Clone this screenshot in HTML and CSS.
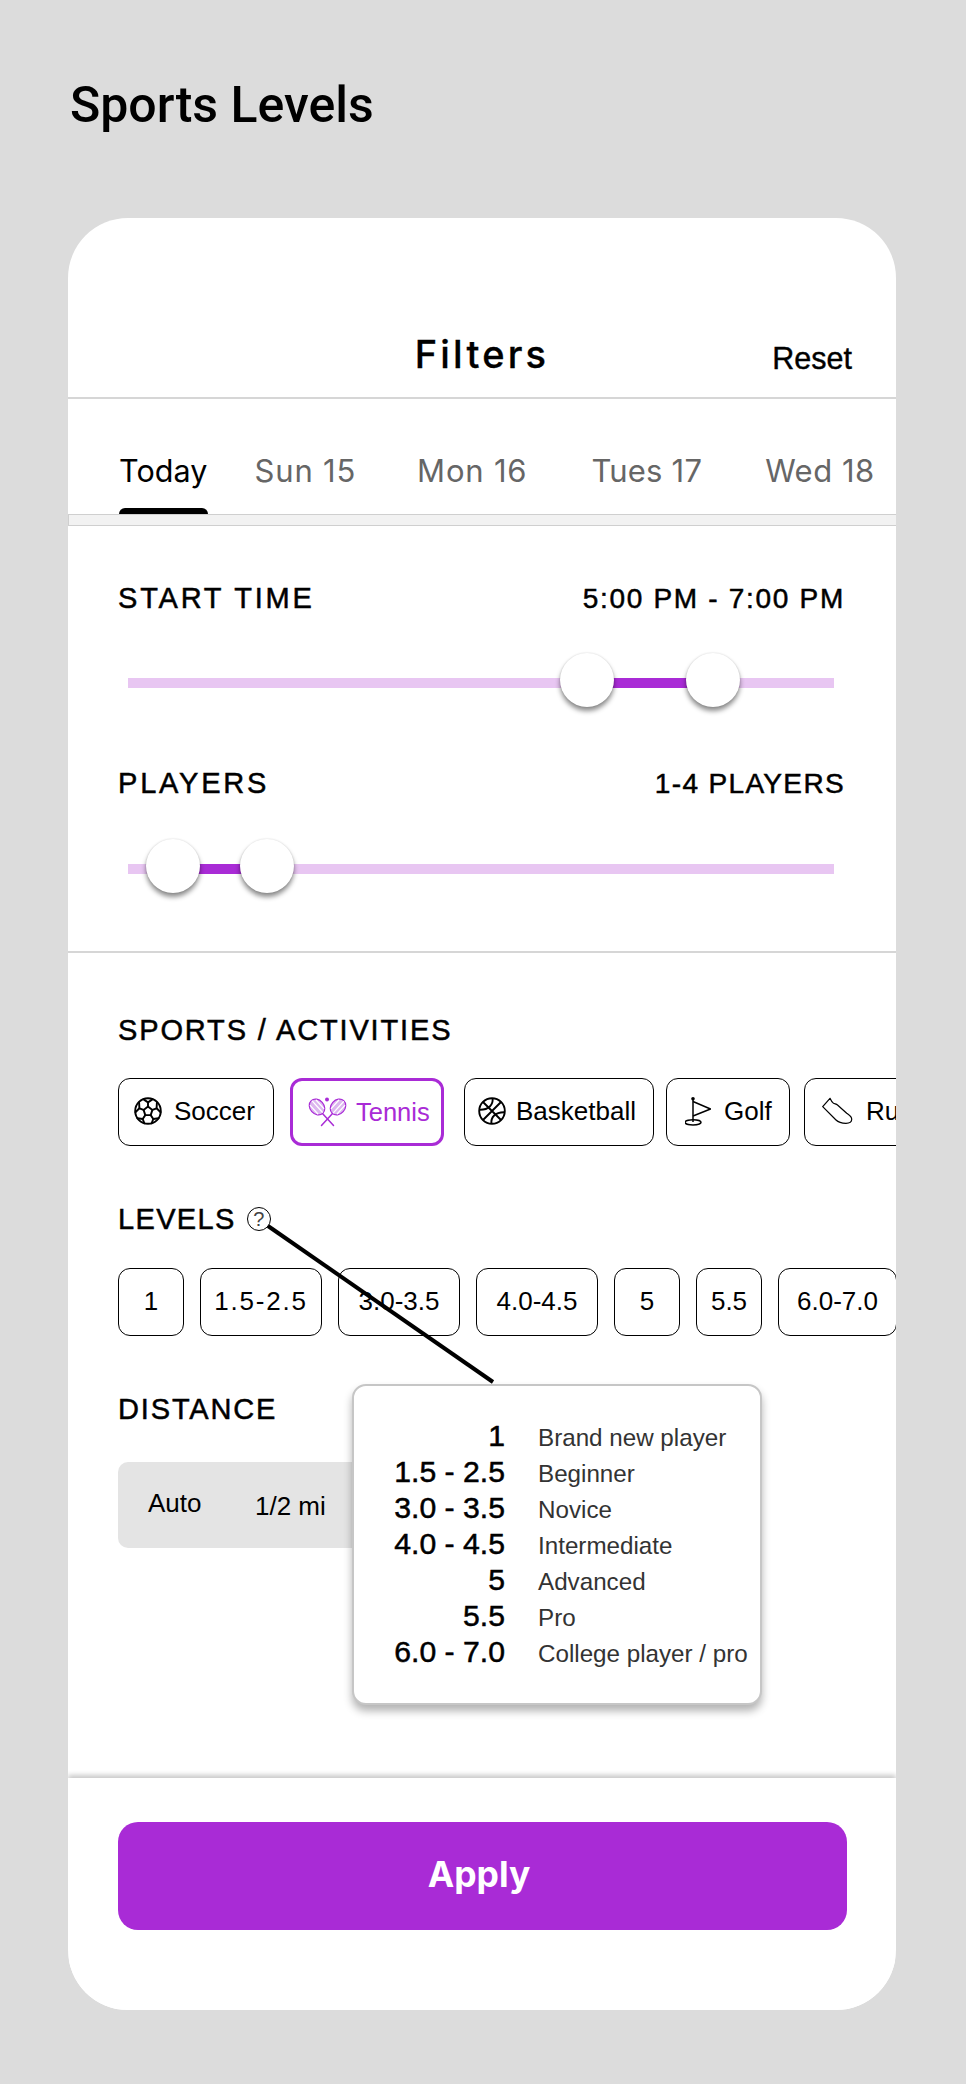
FILE: index.html
```html
<!DOCTYPE html>
<html lang="en">
<head>
<meta charset="utf-8">
<title>Sports Levels</title>
<link rel="stylesheet" href="styles.css">
</head>
<body>
<h1 class="page-title">Sports Levels</h1>
<div class="card">
  <header class="header">
    <span></span>
    <h2 class="header-title">Filters</h2>
    <button class="reset">Reset</button>
  </header>
  <nav class="tabs">
    <span class="tab tab-active">Today</span>
    <span class="tab tab-sun">Sun 15</span>
    <span class="tab">Mon 16</span>
    <span class="tab tab-tues">Tues 17</span>
    <span class="tab tab-wed">Wed 18</span>
  </nav>
  <div class="strip"></div>

  <section class="ranges">
    <div class="label-row">
      <span class="label label-wide">START TIME</span>
      <span class="value">5:00 PM - 7:00 PM</span>
    </div>
    <div class="track">
      <div class="fill" style="left:65%;width:17.9%"></div>
      <div class="thumb" style="left:65%"></div>
      <div class="thumb" style="left:82.9%"></div>
    </div>
    <div class="label-row label-row-second">
      <span class="label label-wide">PLAYERS</span>
      <span class="value value-players">1-4 PLAYERS</span>
    </div>
    <div class="track track-second">
      <div class="fill" style="left:6.4%;width:13.3%"></div>
      <div class="thumb" style="left:6.4%"></div>
      <div class="thumb" style="left:19.7%"></div>
    </div>
  </section>

  <section class="options">
    <div class="label label-block">SPORTS / ACTIVITIES</div>
    <div class="chips">
      <div class="chip chip-soccer">
        <svg class="icon" width="28" height="28" viewBox="0 0 28 28" fill="none" stroke="#000" stroke-width="1.9" stroke-linejoin="round" stroke-linecap="round">
          <circle cx="14" cy="14" r="12.8"/>
          <path d="M14 9.6 18.4 12.9 16.7 18.1H11.3L9.6 12.9Z"/>
          <path d="M14 9.6V5.4M18.4 12.9 22.6 11.3M16.7 18.1 19.3 22M11.3 18.1 8.7 22M9.6 12.9 5.4 11.3"/>
          <path d="M9.6 2.4 14 5.4 18.4 2.4M22.6 11.3 22.9 5.6M22.6 11.3 26.6 15.2M19.3 22 24.6 21.2M19.3 22 17.6 26.3M8.7 22 10.4 26.3M8.7 22 3.4 21.2M5.4 11.3 1.4 15.2M5.4 11.3 5.1 5.6"/>
        </svg>
        <span>Soccer</span>
      </div>
      <div class="chip chip-tennis">
        <svg class="icon" width="39" height="30" viewBox="0 0 39 30" fill="none" stroke="#a92bd6" stroke-linecap="round">
          <g transform="rotate(-42 9 10)">
            <ellipse cx="9" cy="10" rx="7" ry="8.6" fill="#dcb6ef" stroke-width="1.2"/>
            <path d="M5 4.5V15.5M9.5 2.5V17.5M13 4.5V15.5" stroke="#fff" stroke-width="1.3"/>
          </g>
          <g transform="rotate(42 30 10)">
            <ellipse cx="30" cy="10" rx="7" ry="8.6" fill="#dcb6ef" stroke-width="1.2"/>
            <path d="M26 4.5V15.5M30.5 2.5V17.5M34 4.5V15.5" stroke="#fff" stroke-width="1.3"/>
          </g>
          <path d="M14.5 16.5 25.5 28.5M24.5 16.5 13.5 28.5" stroke-width="1.5"/>
          <circle cx="19" cy="2.4" r="2" fill="#a92bd6" stroke="none"/>
        </svg>
        <span>Tennis</span>
      </div>
      <div class="chip chip-basketball">
        <svg class="icon" width="28" height="28" viewBox="0 0 28 28" fill="none" stroke="#000" stroke-width="1.9">
          <circle cx="14" cy="14" r="12.8"/>
          <path d="M5 5 23 23M23 5 5 23"/>
          <path d="M14.6 1.4C15.2 7.6 11 13 1.6 12.8"/>
          <path d="M13.4 26.6C12.8 20.4 17 15 26.4 15.2"/>
        </svg>
        <span>Basketball</span>
      </div>
      <div class="chip chip-golf">
        <svg class="icon" width="26" height="30" viewBox="0 0 26 30" fill="none" stroke="#000" stroke-width="1.5" stroke-linejoin="round">
          <circle cx="8" cy="2.8" r="1.8" fill="#000" stroke="none"/>
          <path d="M8 3V26"/>
          <path d="M8 5.5 25.5 13 8 20"/>
          <ellipse cx="8" cy="26.3" rx="8" ry="2.6"/>
        </svg>
        <span>Golf</span>
      </div>
      <div class="chip chip-run">
        <svg class="icon" width="31" height="28" viewBox="0 0 31 28" fill="none" stroke="#000" stroke-width="1.2" stroke-linejoin="round">
          <path d="M.7 9.7 8 1.3C9 3.5 10 5.5 11.5 6.3 13 7 14.5 7 15.5 8L24.7 16.3C27 18 30 19.5 29.7 22.5 29.5 25.5 27 26.3 24 26.3 20 26.3 16.5 25.5 14 23Z"/>
        </svg>
        <span>Running</span>
      </div>
    </div>

    <div class="label-levels">
      <span class="label label-tight">LEVELS</span>
      <span class="help">?</span>
    </div>
    <div class="levels">
      <div class="chip level level-single">1</div>
      <div class="chip level level-spaced">1.5-2.5</div>
      <div class="chip level">3.0-3.5</div>
      <div class="chip level">4.0-4.5</div>
      <div class="chip level level-single">5</div>
      <div class="chip level level-single">5.5</div>
      <div class="chip level level-last">6.0-7.0</div>
    </div>

    <div class="label label-block label-distance">DISTANCE</div>
    <div class="distance">
      <span class="distance-auto">Auto</span>
      <span class="distance-half">1/2 mi</span>
    </div>
  </section>

  <footer class="footer">
    <button class="apply">Apply</button>
  </footer>

  <svg class="connector" width="240" height="170" viewBox="0 0 240 170">
    <path d="M4 4 L229 160" stroke="#000" stroke-width="4" fill="none"/>
  </svg>

  <div class="popup">
    <span class="lvl">1</span><span class="desc">Brand new player</span>
    <span class="lvl">1.5 - 2.5</span><span class="desc">Beginner</span>
    <span class="lvl">3.0 - 3.5</span><span class="desc">Novice</span>
    <span class="lvl">4.0 - 4.5</span><span class="desc">Intermediate</span>
    <span class="lvl">5</span><span class="desc">Advanced</span>
    <span class="lvl">5.5</span><span class="desc">Pro</span>
    <span class="lvl">6.0 - 7.0</span><span class="desc">College player / pro</span>
  </div>
</div>
</body>
</html>
```
FILE: styles.css
```css
* { box-sizing: border-box; }
html, body { margin: 0; padding: 0; }
body {
  width: 966px;
  height: 2084px;
  background: #dcdcdc;
  font-family: "Liberation Sans", Arial, sans-serif;
  color: #000;
  overflow: hidden;
}
.page-title {
  margin: 0;
  padding: 73px 0 0 70px;
  height: 218px;
  font-family: Roboto, sans-serif;
  font-size: 50px;
  line-height: 64px;
  font-weight: 500;
}
.card {
  position: relative;
  width: 828px;
  height: 1792px;
  margin-left: 68px;
  background: #fff;
  border-radius: 60px;
  overflow: hidden;
  display: flex;
  flex-direction: column;
}
.header {
  display: grid;
  grid-template-columns: 1fr auto 1fr;
  align-items: baseline;
  padding: 112px 44px 19px 44px;
  border-bottom: 2px solid #d6d6d6;
}
.header-title {
  margin: 0;
  font-family: Inter, sans-serif;
  font-size: 38px;
  line-height: 48px;
  font-weight: 500;
  letter-spacing: 3.2px;
  -webkit-text-stroke: 0.3px #000;
}
.reset {
  justify-self: end;
  border: 0;
  background: none;
  padding: 0;
  font-family: "Liberation Sans", Arial, sans-serif;
  font-size: 30.5px;
  line-height: 36px;
  -webkit-text-stroke: 0.4px #000;
  color: #000;
  transform: translateY(1px);
}
.tabs {
  display: flex;
  gap: 64px;
  height: 115px;
  padding-left: 51px;
  white-space: nowrap;
}
.tab {
  position: relative;
  padding-top: 54px;
  font-family: Inter, sans-serif;
  font-size: 31px;
  line-height: 36px;
  letter-spacing: 0.8px;
  color: #666;
}
.tab-active {
  color: #000;
  font-size: 30.5px;
  letter-spacing: 0.1px;
  margin-right: -17px;
}
.tab-sun { margin-right: -3px; }
.tab-tues { letter-spacing: 0.2px; margin-right: -1px; }
.tab-wed { letter-spacing: 0.5px; }
.tab-active::after {
  content: "";
  position: absolute;
  left: 0;
  right: 0;
  bottom: 0;
  height: 6px;
  background: #000;
  border-radius: 6px 6px 0 0;
}
.strip {
  height: 12px;
  background: #f2f2f2;
  border: 1px solid #cfcfcf;
  border-right: 0;
  flex: none;
}
.ranges {
  height: 427px;
  flex: none;
  padding: 56px 62px 0 50px;
  border-bottom: 2px solid #d6d6d6;
}
.label-row {
  display: flex;
  justify-content: space-between;
  align-items: baseline;
  margin-right: -11px;
}
.label-row-second { margin-top: 79px; }
.label {
  font-size: 29px;
  line-height: 32px;
  letter-spacing: 1.85px;
  -webkit-text-stroke: 0.5px #000;
}
.label-wide { letter-spacing: 2.8px; }
.label-tight { letter-spacing: 1.35px; }
.value {
  font-size: 28px;
  line-height: 32px;
  letter-spacing: 1.7px;
  -webkit-text-stroke: 0.5px #000;
}
.value-players { letter-spacing: 1.35px; }
.track {
  position: relative;
  height: 10px;
  margin: 63px 0 0 10px;
  background: #e8c6f2;
}
.track-second { margin-top: 64px; }
.fill {
  position: absolute;
  top: 0;
  bottom: 0;
  background: #a92bd6;
}
.thumb {
  position: absolute;
  top: -25px;
  width: 54px;
  height: 54px;
  margin-left: -27px;
  background: #fff;
  border-radius: 50%;
  box-shadow: 0 4px 5px rgba(0, 0, 0, 0.45), 0 0 2px rgba(0, 0, 0, 0.15);
}
.options {
  flex: 1;
  padding: 61px 0 0 50px;
}
.label-block { display: block; }
.chips, .levels {
  display: flex;
  margin-top: 32px;
}
.levels { margin-top: 33px; }
.chip {
  flex: none;
  height: 68px;
  display: flex;
  align-items: center;
  border: 1.5px solid #000;
  border-radius: 12px;
  font-size: 26px;
  padding-bottom: 2px;
  background: #fff;
}
.icon { flex: none; }
.chip-soccer { width: 156px; padding-left: 15px; gap: 12px; margin-right: 16px; }
.chip-tennis {
  width: 154px;
  padding-left: 15px;
  padding-bottom: 0;
  gap: 9px;
  margin-right: 20px;
  border: 3px solid #a92bd6;
  color: #a92bd6;
  font-size: 25.5px;
}
.chip-basketball { width: 190px; padding-left: 13px; gap: 10px; margin-right: 12px; }
.chip-golf { width: 124px; padding-left: 18px; gap: 13px; margin-right: 14px; }
.chip-run { width: 170px; padding-left: 17px; gap: 13px; }
.label-levels {
  display: flex;
  align-items: center;
  gap: 11px;
  margin-top: 57px;
}
.help {
  width: 24px;
  height: 24px;
  border: 1.5px solid #000;
  border-radius: 50%;
  display: flex;
  align-items: center;
  justify-content: center;
  font-size: 20px;
  line-height: 1;
  color: #444;
}
.level {
  justify-content: center;
  width: 122px;
  margin-right: 16px;
}
.level-single { width: 66px; }
.level-spaced { letter-spacing: 1.8px; }
.level-last { width: 119px; margin-right: 0; }
.label-distance { margin-top: 57px; }
.distance {
  display: flex;
  height: 86px;
  width: 340px;
  margin-top: 37px;
  padding-left: 30px;
  background: #e4e4e4;
  border-radius: 10px;
  font-size: 26px;
  line-height: 30px;
  align-items: center;
}
.distance-auto { width: 107px; margin-top: -5px; }
.distance-half { margin-top: 2px; }
.footer {
  position: relative;
  height: 232px;
  flex: none;
  padding: 44px 49px 0 50px;
  background: #fff;
  box-shadow: 0 -3px 5px rgba(0, 0, 0, 0.22);
}
.apply {
  display: block;
  width: 100%;
  height: 108px;
  border: 0;
  border-radius: 20px;
  background: #a92bd6;
  color: #fff;
  font-family: Inter, sans-serif;
  font-size: 35.5px;
  font-weight: 700;
  padding: 0 7px 3px 0;
}
.connector {
  position: absolute;
  left: 196px;
  top: 1004px;
  pointer-events: none;
}
.popup {
  position: absolute;
  left: 284px;
  top: 1166px;
  width: 410px;
  height: 321px;
  padding: 32px 0 0 0;
  background: #fff;
  border: 2px solid #c6c6c6;
  border-radius: 14px;
  box-shadow: 0 6px 8px rgba(0, 0, 0, 0.3);
  display: grid;
  grid-template-columns: 151px auto;
  grid-auto-rows: 36px;
  column-gap: 33px;
  align-items: baseline;
}
.lvl {
  font-size: 30.2px;
  line-height: 36px;
  text-align: right;
  -webkit-text-stroke: 0.5px #000;
}
.desc {
  font-size: 24.2px;
  line-height: 36px;
  color: #333;
}
```
